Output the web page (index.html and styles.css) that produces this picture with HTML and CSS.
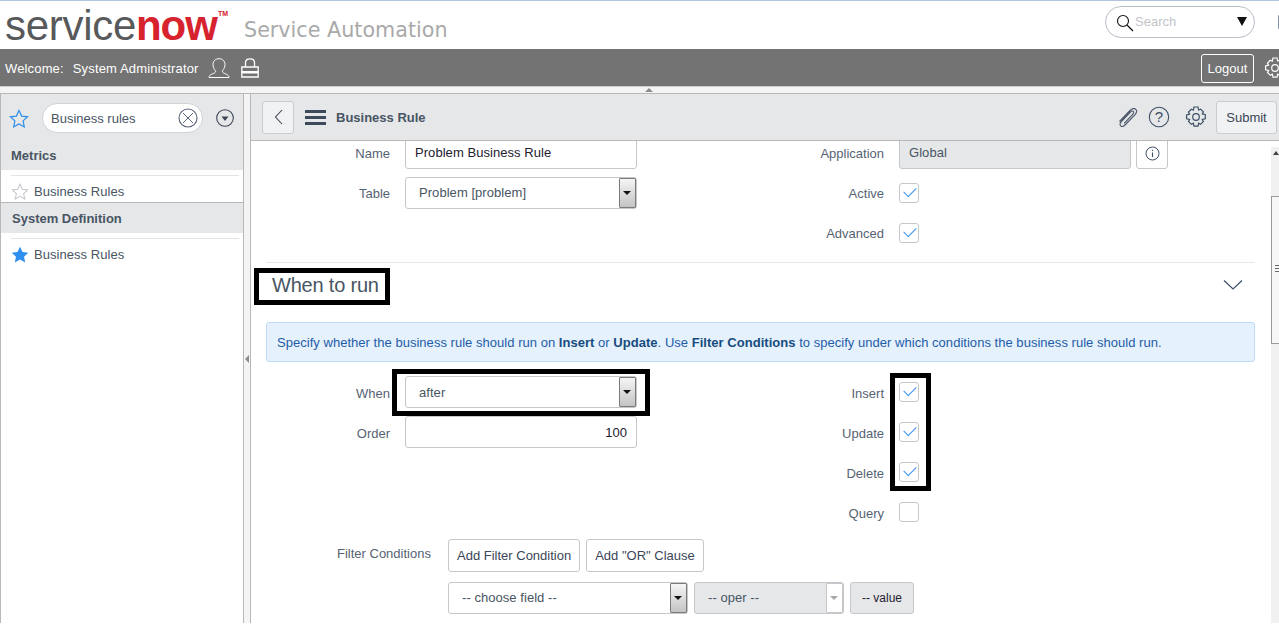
FILE: index.html
```html
<!DOCTYPE html>
<html lang="en">
<head>
  <meta charset="UTF-8">
  <title>ServiceNow Service Automation</title>
  <link rel="stylesheet" href="styles.css">
</head>
<body>
  <header class="banner">
    <div class="logo"><span class="logo-service">service</span><span class="logo-now">now</span><span class="logo-tm">TM</span></div>
    <div class="product">Service Automation</div>
    <div class="global-search">
      <svg class="search-glass" width="18" height="18" viewBox="0 0 18 18"><circle cx="7" cy="7" r="5.5" fill="none" stroke="#111" stroke-width="1.1"/><path d="M11 11l6 6" stroke="#111" stroke-width="1.2"/></svg>
      <span class="search-hint">Search</span>
      <span class="search-caret"></span>
    </div>
    <span class="banner-edge"></span>
  </header>

  <nav class="welcome">
    <span class="welcome-label">Welcome:</span>
    <span class="welcome-name">System Administrator</span>
    <svg class="user-icon" width="22" height="20" viewBox="0 0 22 20"><path d="M1 19.5c0-3.500 5-3.500 6.500-5.500 .8-1.200-2.500-3-2.500-7.500C5 3 7.500 .7 11 .7s6 2.300 6 5.800c0 4.500-3.300 6.300-2.500 7.500C16 16 21 16 21 19.500z" fill="none" stroke="#fff" stroke-width="1"/></svg>
    <svg class="lock-icon" width="18" height="20" viewBox="0 0 18 20"><path d="M4.500 9V4.500C4.500 2 6.500 .8 9 .8s4.500 1.200 4.500 3.700V9" fill="none" stroke="#fff" stroke-width="1.300"/><path d="M.8 9h16.400v10H.8z" fill="none" stroke="#fff" stroke-width="1.300"/><path d="M1 13h16v2.500H1z" fill="#fff"/></svg>
    <button class="logout">Logout</button>
    <svg class="gear gear-white" width="22" height="22" viewBox="0 0 22 22"><use href="#gear-shape"/></svg>
  </nav>

  <div class="splitter"><span class="splitter-arrow"></span></div>

  <div class="workspace">
    <aside class="sidebar">
      <div class="filter-bar">
        <svg width="20" height="19" viewBox="0 0 20 19"><path d="M10 1.500l2.600 5.600 6 .7-4.500 4.100 1.200 6-5.300-3-5.300 3 1.200-6L1.400 7.800l6-.7z" fill="none" stroke="#2e8fe8" stroke-width="1.200"/></svg>
        <div class="filter-input">
          <span class="filter-text">Business rules</span>
          <svg class="filter-clear" width="20" height="20" viewBox="0 0 20 20"><circle cx="10" cy="10" r="9" fill="#fff" stroke="#5a6478" stroke-width="1.100"/><path d="M5 5l10 10M15 5L5 15" stroke="#5a6478" stroke-width="1"/></svg>
        </div>
        <svg class="filter-menu" width="18" height="18" viewBox="0 0 18 18"><circle cx="9" cy="9" r="8.300" fill="none" stroke="#3d4657" stroke-width="1.100"/><path d="M5.500 7.500h7L9 12z" fill="#3d4657"/></svg>
      </div>
      <section class="app-group">
        <h2 class="app-title">Metrics</h2>
        <ul class="module-list module-list-short">
          <li>
            <svg width="18" height="17" viewBox="0 0 20 19"><path d="M10 1.500l2.600 5.600 6 .7-4.500 4.100 1.200 6-5.300-3-5.300 3 1.200-6L1.400 7.800l6-.7z" fill="#fff" stroke="#c4c7cc" stroke-width="1.200"/></svg>
            Business Rules
          </li>
        </ul>
      </section>
      <section class="app-group">
        <h2 class="app-title app-title-ruled">System Definition</h2>
        <ul class="module-list">
          <li>
            <svg width="18" height="17" viewBox="0 0 20 19"><path d="M10 .8l2.800 5.900 6.500.8-4.800 4.400 1.300 6.500-5.800-3.200-5.800 3.200 1.300-6.500L.7 7.500l6.500-.8z" fill="#2e8fee"/></svg>
            Business Rules
          </li>
        </ul>
      </section>
    </aside>

    <div class="sidebar-handle"><span class="handle-arrow"></span></div>

    <main class="main">
      <div class="toolbar">
        <button class="back-btn"><svg width="9" height="16" viewBox="0 0 9 16"><path d="M8 1L1.500 8 8 15" fill="none" stroke="#3d4657" stroke-width="1.100"/></svg></button>
        <span class="hamburger"><i></i><i></i><i></i></span>
        <span class="toolbar-title">Business Rule</span>
        <svg class="clip-icon" width="22" height="22" viewBox="0 0 22 22"><path d="M2.500 15.500L13 4.500c2-2 4.500-2.500 5.800-1.200s.8 3.800-1.200 5.800L8 19c-1.500 1.500-3.200 1.800-4.300.8s-.8-2.800.7-4.300l9-9.500c1-1 2.200-1.300 2.900-.6s.4 1.900-.6 2.900l-8.500 9" fill="none" stroke="#4a5468" stroke-width="1.100"/></svg>
        <svg class="help-icon" width="22" height="22" viewBox="0 0 22 22"><circle cx="11" cy="11" r="9.700" fill="none" stroke="#3d4f66" stroke-width="1.100"/><text x="11" y="16" text-anchor="middle" class="help-mark">?</text></svg>
        <svg class="gear" width="22" height="22" viewBox="0 0 22 22">
          <defs>
            <g id="gear-shape" fill="none" stroke="currentColor" stroke-width="1.200">
              <circle cx="11" cy="11" r="3.300"/>
              <path d="M9 1h4l.6 3 2-.9 2.800 2.800-1.100 2 3 .9v4l-3 .7 1.100 2-2.800 2.800-2-1.100-.6 3H9l-.7-3-2 1.100-2.800-2.800 1.100-2-3-.7V9l3-.9-1.100-2 2.800-2.800 2 .9z"/>
            </g>
          </defs>
          <use href="#gear-shape"/>
        </svg>
        <button class="submit-btn">Submit</button>
      </div>

      <div class="pane">
        <div class="form">
          <div class="form-section">
            <div class="form-col">
              <div class="row"><label>Name</label><div class="field field-text">Problem Business Rule</div></div>
              <div class="row"><label>Table</label><div class="field field-select">Problem [problem]<span class="select-arrow"></span></div></div>
            </div>
            <div class="form-col">
              <div class="row"><label>Application</label><div class="field field-readonly">Global</div><button class="info-btn"><svg width="15" height="15" viewBox="0 0 15 15"><circle cx="7.500" cy="7.500" r="6.500" fill="none" stroke="#3d4f66"/><path d="M7.500 6.500v4.500M7.500 3.700v1.300" stroke="#3d4f66" stroke-width="1.100"/></svg></button></div>
              <div class="row"><label>Active</label><span class="check is-on"></span></div>
              <div class="row"><label>Advanced</label><span class="check is-on"></span></div>
            </div>
          </div>

          <div class="section-head">
            <h3>When to run</h3>
            <svg width="20" height="12" viewBox="0 0 20 12"><path d="M1 1.500l9 8.500 9-8.500" fill="none" stroke="#3d4f66" stroke-width="1.200"/></svg>
          </div>

          <div class="hint">Specify whether the business rule should run on <b>Insert</b> or <b>Update</b>. Use <b>Filter Conditions</b> to specify under which conditions the business rule should run.</div>

          <div class="form-section form-section-low">
            <div class="form-col">
              <div class="row"><label>When</label><div class="field field-select">after<span class="select-arrow"></span></div></div>
              <div class="row"><label>Order</label><div class="field field-number">100</div></div>
            </div>
            <div class="form-col">
              <div class="row"><label>Insert</label><span class="check is-on"></span></div>
              <div class="row"><label>Update</label><span class="check is-on"></span></div>
              <div class="row"><label>Delete</label><span class="check is-on"></span></div>
              <div class="row"><label>Query</label><span class="check"></span></div>
            </div>
          </div>

          <div class="filter-row">
            <label>Filter Conditions</label>
            <div class="filter-body">
              <div class="filter-actions">
                <button class="plain-btn">Add Filter Condition</button>
                <button class="plain-btn">Add "OR" Clause</button>
              </div>
              <div class="filter-fields">
                <div class="field field-select field-choose">-- choose field --<span class="select-arrow"></span></div>
                <div class="field field-select field-oper">-- oper --<span class="select-arrow select-arrow-off"></span></div>
                <div class="field-value">-- value</div>
              </div>
            </div>
          </div>
        </div>

        <div class="scrollbar">
          <span class="scroll-up"></span>
          <span class="scroll-thumb"><span class="scroll-grip"></span></span>
        </div>

        <span class="mark mark-heading"></span>
        <span class="mark mark-when"></span>
        <span class="mark mark-checks"></span>
      </div>
    </main>
  </div>
</body>
</html>
```

FILE: styles.css
```css
* {
  box-sizing: border-box;
}

html, body {
  height: 624px;
}

body {
  margin: 0;
  overflow: hidden;
  font-family: "Liberation Sans", Arial, sans-serif;
  font-size: 13px;
  color: #485563;
  background: #fff;
}

button {
  font-family: inherit;
}

/* banner */
.banner {
  display: flex;
  align-items: center;
  height: 49px;
  border-top: 1px solid #b0c4de;
  padding-left: 5px;
  background: #fff;
}

.logo {
  display: flex;
  width: 225px;
  height: 48px;
  padding-top: 2px;
  font-size: 42px;
  line-height: 46px;
  letter-spacing: -0.3px;
}

.logo-service {
  color: #58595b;
}

.logo-now {
  color: #d6232e;
  font-weight: bold;
  letter-spacing: -1px;
}

.logo-tm {
  margin: 7px 0 0 1px;
  font-size: 7px;
  line-height: 8px;
  font-weight: bold;
  color: #d6232e;
  letter-spacing: 0;
}

.product {
  margin: 10px 0 0 14px;
  font-family: "DejaVu Sans", sans-serif;
  font-size: 20.700px;
  color: #a9a9a9;
}

.global-search {
  display: flex;
  align-items: center;
  width: 150px;
  height: 32px;
  margin: 0 0 7px auto;
  padding: 0 7px 0 10px;
  border: 1px solid #b9bec7;
  border-radius: 16px;
}

.search-glass {
  flex: none;
  margin: 2px 0 0 0;
}

.search-hint {
  margin-left: 1px;
  font-size: 13px;
  color: #c2c4ca;
}

.search-caret {
  margin-left: auto;
  border-left: 5px solid transparent;
  border-right: 5px solid transparent;
  border-top: 9px solid #111;
}

.banner-edge {
  flex: none;
  width: 3px;
  height: 14px;
  margin: 0 -2px 7px 23px;
  background: #8a93a3;
  border-radius: 1px;
}

/* welcome bar */
.welcome {
  display: flex;
  align-items: center;
  height: 37px;
  padding: 1px 0 0 5px;
  background: #737373;
  color: #fff;
  font-size: 13px;
  letter-spacing: 0.15px;
  overflow: hidden;
}

.welcome-name {
  margin-left: 9px;
}

.user-icon {
  margin-left: 9px;
}

.lock-icon {
  margin-left: 11px;
}

.logout {
  width: 53px;
  height: 29px;
  margin: 0 10px 0 auto;
  padding: 0;
  border: 1px solid #fff;
  border-radius: 3px;
  background: transparent;
  color: #fff;
  font-size: 13px;
}

.splitter {
  position: relative;
  height: 7px;
  background: #f4f4f4;
  border-top: 1px solid #cfcfcf;
}

.splitter-arrow {
  position: absolute;
  top: 1px;
  left: 645px;
  border-left: 4px solid transparent;
  border-right: 4px solid transparent;
  border-bottom: 4px solid #8c8c8c;
}

/* columns */
.workspace {
  display: flex;
  height: 530px;
  border-top: 1px solid #b8b8b8;
}

.sidebar {
  flex: none;
  width: 244px;
  border-left: 1px solid #b8b8b8;
  border-right: 1px solid #b8b8b8;
  background: #fff;
}

.filter-bar {
  display: flex;
  align-items: center;
  height: 46px;
  padding: 2px 9px 0 8px;
  background: #e6e7e9;
}

.filter-input {
  display: flex;
  align-items: center;
  justify-content: space-between;
  width: 161px;
  height: 30px;
  margin-left: 13px;
  padding: 0 4px 0 8px;
  border: 1px solid #cfd2d6;
  border-radius: 15px;
  background: #fff;
  font-size: 13px;
}

.filter-clear {
  flex: none;
}

.filter-menu {
  margin-left: auto;
}

.app-title {
  display: flex;
  align-items: center;
  height: 30px;
  margin: 0;
  padding-left: 10px;
  background: #e6e7e9;
  font-size: 13px;
  color: #485563;
}

.app-title-ruled {
  height: 31px;
  border-top: 1px solid #b8b8b8;
  padding-left: 11px;
}

.module-list {
  list-style: none;
  margin: 5px 4px 0 10px;
  padding: 0;
  border-top: 1px solid #e2e3e5;
}

.module-list-short {
  height: 27px;
  overflow: hidden;
}

.module-list li {
  display: flex;
  align-items: center;
  gap: 5px;
  height: 31px;
  letter-spacing: 0.05px;
}

.sidebar-handle {
  flex: none;
  display: flex;
  align-items: center;
  width: 6px;
  background: #f4f4f4;
}

.handle-arrow {
  margin: 0 0 0 1px;
  border-top: 4px solid transparent;
  border-bottom: 4px solid transparent;
  border-right: 4px solid #8c8c8c;
}

.main {
  flex: 1;
  min-width: 0;
  border-left: 1px solid #b8b8b8;
  background: #fff;
}

.toolbar {
  display: flex;
  align-items: center;
  height: 47px;
  padding: 0 2px 0 11px;
  background: #e6e7e9;
  border-bottom: 1px solid #b8b8b8;
}

.back-btn {
  display: flex;
  align-items: center;
  justify-content: center;
  width: 32px;
  height: 33px;
  padding: 0;
  border: 1px solid #c9ccd0;
  border-radius: 3px;
  background: #f1f2f3;
}

.hamburger {
  display: flex;
  flex-direction: column;
  gap: 3px;
  margin-left: 11px;
}

.hamburger i {
  display: block;
  width: 21px;
  height: 3px;
  background: #3d4a5c;
}

.toolbar-title {
  margin-left: 10px;
  font-weight: bold;
  font-size: 13px;
  color: #485563;
}

.clip-icon {
  margin-left: auto;
}

.help-icon {
  margin-left: 9px;
}

.help-mark {
  font-size: 15px;
  fill: #3d4f66;
}

.gear {
  color: #3d4f66;
}

.gear-white {
  flex: none;
  margin-right: -7px;
  color: #fff;
}

.toolbar .gear {
  margin-left: 15px;
}

.submit-btn {
  width: 61px;
  height: 33px;
  margin-left: 9px;
  padding: 0;
  border: 1px solid #c9ccd0;
  border-radius: 3px;
  background: #f1f2f3;
  color: #3b4658;
  font-size: 13px;
}

/* form */
.pane {
  position: relative;
  height: 482px;
  overflow: hidden;
}

.form {
  width: 1020px;
  margin-top: -8px;
}

.form-section {
  display: flex;
}

.form-col {
  width: 493px;
}

.form-col + .form-col {
  width: 520px;
}

.row {
  display: flex;
  align-items: center;
  height: 40px;
}

.row label {
  flex: none;
  width: 154px;
  padding-right: 15px;
  text-align: right;
  color: #566373;
}

.form-col + .form-col .row label {
  width: 155px;
}

.field {
  position: relative;
  width: 232px;
  height: 32px;
  border: 1px solid #c5c7cb;
  border-radius: 3px;
  background: #fff;
  line-height: 30px;
  letter-spacing: 0.05px;
}

.form-section-low .field {
  margin-top: -2px;
  line-height: 32px;
}

.form-section-low .check {
  margin-top: -2px;
}

.field-text {
  padding-left: 9px;
  color: #24202e;
}

.field-select {
  padding-left: 13px;
}

.field-number {
  padding-right: 9px;
  text-align: right;
  color: #24202e;
}

.field-readonly {
  padding-left: 9px;
  background: #e6e7e9;
}

.select-arrow {
  position: absolute;
  top: 0;
  right: 0;
  width: 17px;
  height: 30px;
  border: 1px solid #7b7b7b;
  border-radius: 1px;
  background: linear-gradient(#f5f5f5, #c4c4c4);
}

.select-arrow::after {
  content: "";
  position: absolute;
  top: 12px;
  left: 3px;
  border-left: 4px solid transparent;
  border-right: 4px solid transparent;
  border-top: 4px solid #111;
}

.select-arrow-off {
  border-color: #c5c7cb;
  background: #fff;
}

.select-arrow-off::after {
  border-top-color: #a8a8a8;
}

.info-btn {
  display: flex;
  align-items: center;
  justify-content: center;
  width: 32px;
  height: 32px;
  margin-left: 5px;
  padding: 0;
  border: 1px solid #c5c7cb;
  border-radius: 3px;
  background: #fff;
}

.check {
  position: relative;
  width: 20px;
  height: 20px;
  border: 1px solid #c5c7cb;
  border-radius: 3px;
  background: #fff;
}

.is-on::after {
  content: "";
  position: absolute;
  top: 3px;
  left: 4px;
  width: 11px;
  height: 6px;
  border-left: 1px solid #3b93f0;
  border-bottom: 1px solid #3b93f0;
  transform: rotate(-45deg);
}

.section-head {
  display: flex;
  align-items: center;
  justify-content: space-between;
  height: 45px;
  margin: 9px 16px 0 15px;
  padding: 0 0 0 6px;
  border-top: 1px solid #e6e7e9;
}

.section-head h3 {
  margin: 0;
  font-size: 20px;
  font-weight: normal;
  letter-spacing: -0.2px;
  color: #485563;
}

.section-head svg {
  margin-right: 12px;
}

.hint {
  width: 989px;
  height: 40px;
  margin: 15px 0 11px 15px;
  padding: 0 10px;
  border: 1px solid #bcdcfa;
  border-radius: 3px;
  background: #e5f1fc;
  color: #1f5da8;
  line-height: 39px;
  letter-spacing: 0.03px;
  white-space: nowrap;
}

.hint b {
  color: #174c80;
}

.filter-row {
  display: flex;
  margin-top: 6px;
}

.filter-row > label {
  flex: none;
  width: 180px;
  padding: 7px 0 0 86px;
  white-space: nowrap;
  color: #566373;
}

.filter-body {
  margin-left: 17px;
}

.filter-actions {
  display: flex;
  gap: 6px;
}

.plain-btn {
  height: 33px;
  padding: 0 8px;
  border: 1px solid #c5c7cb;
  border-radius: 3px;
  background: #fff;
  color: #3b4658;
  font-size: 13px;
}

.filter-fields {
  display: flex;
  gap: 6px;
  margin-top: 10px;
}

.field-choose {
  width: 240px;
}

.field-oper {
  width: 150px;
  background: #e6e7e9;
}

.field-value {
  width: 64px;
  height: 32px;
  border: 1px solid #c5c7cb;
  border-radius: 3px;
  background: #e6e7e9;
  text-align: center;
  line-height: 30px;
  font-size: 12px;
  color: #24202e;
}

/* scrollbar */
.scrollbar {
  position: absolute;
  top: 6px;
  right: 0;
  bottom: 0;
  width: 8px;
  background: #f1f1f1;
}

.scroll-up {
  position: absolute;
  top: 4px;
  left: 2px;
  border-left: 3px solid transparent;
  border-right: 3px solid transparent;
  border-bottom: 4px solid #444;
}

.scroll-thumb {
  position: absolute;
  top: 49px;
  left: 0;
  width: 8px;
  height: 148px;
  border: 1px solid #9a9a9a;
  border-right: 0;
  background: #f7f7f7;
}

.scroll-grip {
  position: absolute;
  top: 68px;
  left: 3px;
  width: 5px;
  height: 7px;
  border-top: 1px solid #666;
  border-bottom: 1px solid #666;
  background: linear-gradient(transparent 2px, #666 2px, #666 3px, transparent 3px);
}

/* annotation frames drawn over the form */
.mark {
  position: absolute;
  border: 5px solid #000;
}

.mark-heading {
  top: 127px;
  left: 3px;
  width: 136px;
  height: 37px;
}

.mark-when {
  top: 228px;
  left: 141px;
  width: 258px;
  height: 47px;
}

.mark-checks {
  top: 232px;
  left: 639px;
  width: 41px;
  height: 118px;
}
```
